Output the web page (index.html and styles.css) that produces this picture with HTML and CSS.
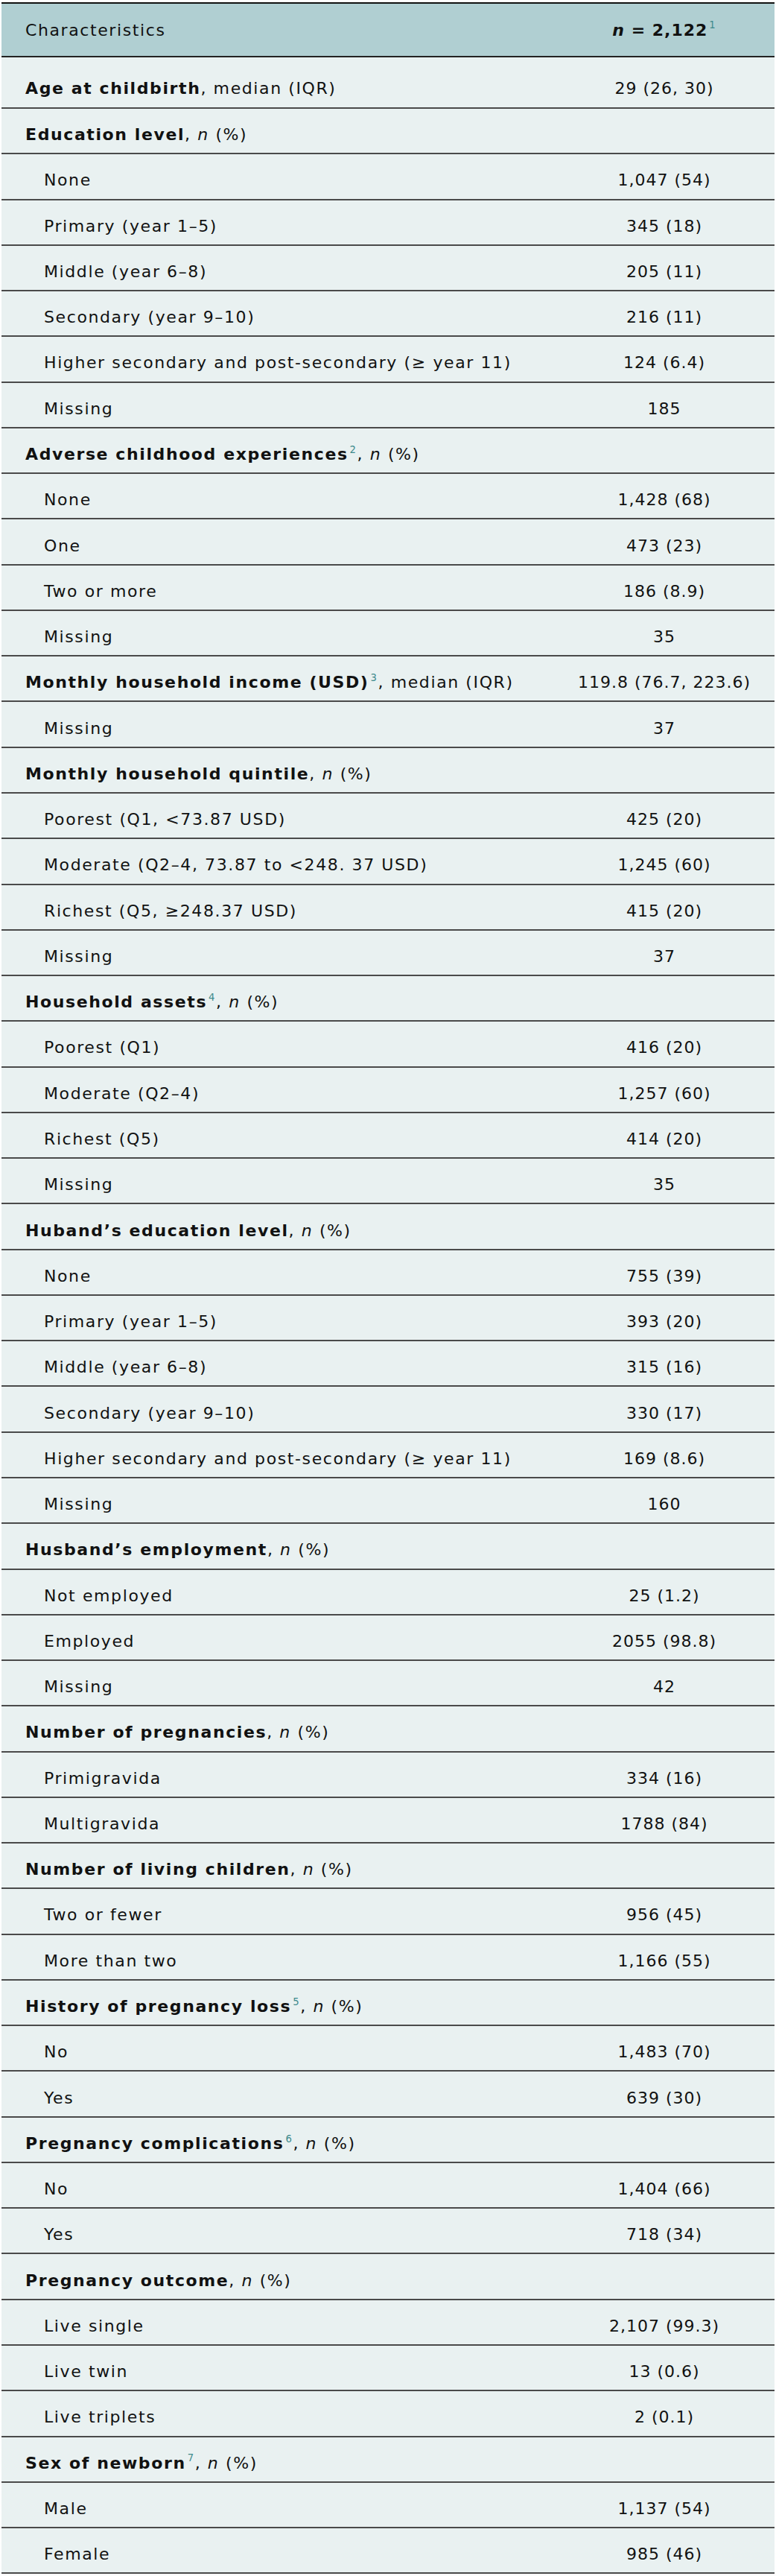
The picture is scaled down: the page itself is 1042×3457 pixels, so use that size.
FILE: index.html
```html
<!DOCTYPE html>
<html lang="en">
<head>
    <meta charset="UTF-8">
    <meta name="viewport" content="width=device-width, initial-scale=1.0">
    <title>Characteristics of participants</title>
    <link rel="stylesheet" href="styles.css">
</head>
<body>
    <table class="data-table">
        <thead>
            <tr>
                <th class="col-label">Characteristics</th>
                <th class="col-value"><b><i>n</i> = 2,122</b><sup class="fn">1</sup></th>
            </tr>
        </thead>
        <tbody>
            <tr class="first">
                <td class="group"><b>Age at childbirth</b>, median (IQR)</td>
                <td class="value">29 (26, 30)</td>
            </tr>
            <tr>
                <td class="group"><b>Education level</b>, <i>n</i> (%)</td>
                <td class="value"></td>
            </tr>
            <tr><td class="sub">None</td><td class="value">1,047 (54)</td></tr>
            <tr><td class="sub">Primary (year 1–5)</td><td class="value">345 (18)</td></tr>
            <tr><td class="sub">Middle (year 6–8)</td><td class="value">205 (11)</td></tr>
            <tr><td class="sub">Secondary (year 9–10)</td><td class="value">216 (11)</td></tr>
            <tr><td class="sub">Higher secondary and post-secondary (≥ year 11)</td><td class="value">124 (6.4)</td></tr>
            <tr><td class="sub">Missing</td><td class="value">185</td></tr>

            <tr>
                <td class="group"><b>Adverse childhood experiences</b><sup class="fn">2</sup>, <i>n</i> (%)</td>
                <td class="value"></td>
            </tr>
            <tr><td class="sub">None</td><td class="value">1,428 (68)</td></tr>
            <tr><td class="sub">One</td><td class="value">473 (23)</td></tr>
            <tr><td class="sub">Two or more</td><td class="value">186 (8.9)</td></tr>
            <tr><td class="sub">Missing</td><td class="value">35</td></tr>

            <tr>
                <td class="group"><b>Monthly household income (USD)</b><sup class="fn">3</sup>, median (IQR)</td>
                <td class="value">119.8 (76.7, 223.6)</td>
            </tr>
            <tr><td class="sub">Missing</td><td class="value">37</td></tr>

            <tr>
                <td class="group"><b>Monthly household quintile</b>, <i>n</i> (%)</td>
                <td class="value"></td>
            </tr>
            <tr><td class="sub">Poorest (Q1, &lt;73.87 USD)</td><td class="value">425 (20)</td></tr>
            <tr><td class="sub">Moderate (Q2–4, 73.87 to &lt;248. 37 USD)</td><td class="value">1,245 (60)</td></tr>
            <tr><td class="sub">Richest (Q5, ≥248.37 USD)</td><td class="value">415 (20)</td></tr>
            <tr><td class="sub">Missing</td><td class="value">37</td></tr>

            <tr>
                <td class="group"><b>Household assets</b><sup class="fn">4</sup>, <i>n</i> (%)</td>
                <td class="value"></td>
            </tr>
            <tr><td class="sub">Poorest (Q1)</td><td class="value">416 (20)</td></tr>
            <tr><td class="sub">Moderate (Q2–4)</td><td class="value">1,257 (60)</td></tr>
            <tr><td class="sub">Richest (Q5)</td><td class="value">414 (20)</td></tr>
            <tr><td class="sub">Missing</td><td class="value">35</td></tr>

            <tr>
                <td class="group"><b>Huband’s education level</b>, <i>n</i> (%)</td>
                <td class="value"></td>
            </tr>
            <tr><td class="sub">None</td><td class="value">755 (39)</td></tr>
            <tr><td class="sub">Primary (year 1–5)</td><td class="value">393 (20)</td></tr>
            <tr><td class="sub">Middle (year 6–8)</td><td class="value">315 (16)</td></tr>
            <tr><td class="sub">Secondary (year 9–10)</td><td class="value">330 (17)</td></tr>
            <tr><td class="sub">Higher secondary and post-secondary (≥ year 11)</td><td class="value">169 (8.6)</td></tr>
            <tr><td class="sub">Missing</td><td class="value">160</td></tr>

            <tr>
                <td class="group"><b>Husband’s employment</b>, <i>n</i> (%)</td>
                <td class="value"></td>
            </tr>
            <tr><td class="sub">Not employed</td><td class="value">25 (1.2)</td></tr>
            <tr><td class="sub">Employed</td><td class="value">2055 (98.8)</td></tr>
            <tr><td class="sub">Missing</td><td class="value">42</td></tr>

            <tr>
                <td class="group"><b>Number of pregnancies</b>, <i>n</i> (%)</td>
                <td class="value"></td>
            </tr>
            <tr><td class="sub">Primigravida</td><td class="value">334 (16)</td></tr>
            <tr><td class="sub">Multigravida</td><td class="value">1788 (84)</td></tr>

            <tr>
                <td class="group"><b>Number of living children</b>, <i>n</i> (%)</td>
                <td class="value"></td>
            </tr>
            <tr><td class="sub">Two or fewer</td><td class="value">956 (45)</td></tr>
            <tr><td class="sub">More than two</td><td class="value">1,166 (55)</td></tr>

            <tr>
                <td class="group"><b>History of pregnancy loss</b><sup class="fn">5</sup>, <i>n</i> (%)</td>
                <td class="value"></td>
            </tr>
            <tr><td class="sub">No</td><td class="value">1,483 (70)</td></tr>
            <tr><td class="sub">Yes</td><td class="value">639 (30)</td></tr>

            <tr>
                <td class="group"><b>Pregnancy complications</b><sup class="fn">6</sup>, <i>n</i> (%)</td>
                <td class="value"></td>
            </tr>
            <tr><td class="sub">No</td><td class="value">1,404 (66)</td></tr>
            <tr><td class="sub">Yes</td><td class="value">718 (34)</td></tr>

            <tr>
                <td class="group"><b>Pregnancy outcome</b>, <i>n</i> (%)</td>
                <td class="value"></td>
            </tr>
            <tr><td class="sub">Live single</td><td class="value">2,107 (99.3)</td></tr>
            <tr><td class="sub">Live twin</td><td class="value">13 (0.6)</td></tr>
            <tr><td class="sub">Live triplets</td><td class="value">2 (0.1)</td></tr>

            <tr>
                <td class="group"><b>Sex of newborn</b><sup class="fn">7</sup>, <i>n</i> (%)</td>
                <td class="value"></td>
            </tr>
            <tr><td class="sub">Male</td><td class="value">1,137 (54)</td></tr>
            <tr><td class="sub">Female</td><td class="value">985 (46)</td></tr>
        </tbody>
    </table>
</body>
</html>
```

FILE: styles.css
```css
/* Reset */
* {
    margin: 0;
    padding: 0;
    box-sizing: border-box;
}

body {
    font-family: 'DejaVu Sans', 'Open Sans', sans-serif;
    font-size: 22px;
    letter-spacing: 1.6px;
    color: #111;
    background-color: #ffffff;
    padding: 3px 2px 0;
}

/* Table */
.data-table {
    width: 100%;
    border-collapse: collapse;
    border-top: 2px solid #111;
    border-bottom: 2px solid #111;
    background-color: #e9f1f1;
}

.data-table th {
    background-color: #b0cfd2;
    font-weight: normal;
    height: 72px;
    border-bottom: 2px solid #222;
}

.data-table td {
    height: 61.28px;
    padding-top: 10px;
    border-bottom: 2px solid #4a4a4a;
    vertical-align: middle;
}

.col-label,
.group {
    text-align: left;
    padding-left: 32px;
}

.sub {
    text-align: left;
    padding-left: 57px;
}

.col-value,
.value {
    width: 296px;
    text-align: center;
    letter-spacing: 1px;
}

/* first body row is taller, text sits low */
.data-table .first td {
    height: 69px;
    padding-top: 15px;
}

/* Footnote markers */
.fn {
    color: #3d8a8c;
    font-size: 0.6em;
    font-weight: normal;
    vertical-align: 0.7em;
    line-height: 0;
    margin-left: 2px;
}
```
